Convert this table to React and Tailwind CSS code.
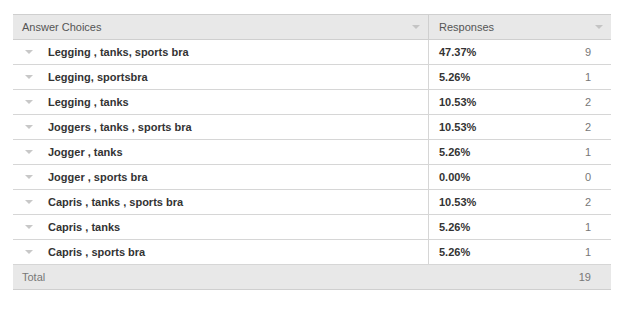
const rows = [
  { label: 'Legging , tanks, sports bra', pct: '47.37%', count: 9 },
  { label: 'Legging, sportsbra', pct: '5.26%', count: 1 },
  { label: 'Legging , tanks', pct: '10.53%', count: 2 },
  { label: 'Joggers , tanks , sports bra', pct: '10.53%', count: 2 },
  { label: 'Jogger , tanks', pct: '5.26%', count: 1 },
  { label: 'Jogger , sports bra', pct: '0.00%', count: 0 },
  { label: 'Capris , tanks , sports bra', pct: '10.53%', count: 2 },
  { label: 'Capris , tanks', pct: '5.26%', count: 1 },
  { label: 'Capris , sports bra', pct: '5.26%', count: 1 },
];

const Caret = ({ className = '' }) => (
  <span
    className={`inline-block w-0 h-0 border-l-[4px] border-r-[4px] border-t-[4px] border-l-transparent border-r-transparent ${className}`}
  />
);

export default function App() {
  return (
    <div className="bg-white w-[637px] h-[313px] pt-[14px] pl-[13px] font-['Liberation_Sans',Arial,sans-serif] text-[11px]">
      <div className="w-[598px] border-t border-[#cfcfcf]">
        {/* header */}
        <div className="grid grid-cols-[416px_182px] h-[25px] bg-[#e8e8e8] border-b border-[#cfcfcf] text-[#555]">
          <div className="flex items-center justify-between pl-[9px] pr-[8px] border-r border-[#cfcfcf]">
            <span>Answer Choices</span>
            <Caret className="border-t-[#c4c4c4]" />
          </div>
          <div className="flex items-center justify-between pl-[10px] pr-[8px]">
            <span>Responses</span>
            <Caret className="border-t-[#c4c4c4]" />
          </div>
        </div>

        {rows.map((r) => (
          <div
            key={r.label}
            className="grid grid-cols-[416px_182px] h-[25px] border-b border-[#d6d6d6]"
          >
            <div className="flex items-center pl-[12px] border-r border-[#d6d6d6]">
              <Caret className="border-t-[#c8c8c8] mr-[15px]" />
              <span className="font-bold text-[#333]">{r.label}</span>
            </div>
            <div className="flex items-center justify-between pl-[10px] pr-[20px]">
              <span className="font-bold text-[#333]">{r.pct}</span>
              <span className="text-[#777]">{r.count}</span>
            </div>
          </div>
        ))}

        {/* total */}
        <div className="flex items-center justify-between h-[25px] bg-[#e8e8e8] border-b border-[#cfcfcf] pl-[9px] pr-[20px] text-[#777]">
          <span>Total</span>
          <span>19</span>
        </div>
      </div>
    </div>
  );
}
